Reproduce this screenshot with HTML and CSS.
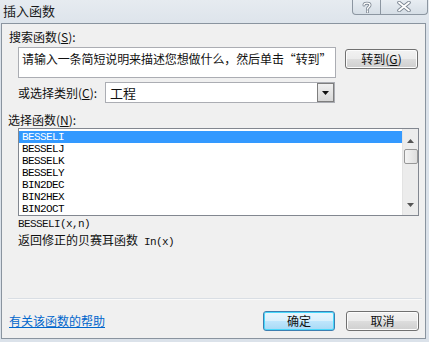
FILE: index.html
```html
<!DOCTYPE html>
<html>
<head>
<meta charset="utf-8">
<link rel="stylesheet" href="styles.css">
</head>
<body>
<div class="window">
  <div class="titlebar">
    <span class="title">插入函数</span>
    <div class="caption">
      <div class="cap-btn help">
        <svg width="12" height="12" viewBox="0 0 12 12"><path d="M3 4 C3 1.5 9 1.5 9 4 C9 6 6.5 6 6.5 8 M6.5 10 L6.5 11" fill="none" stroke="#7d8793" stroke-width="3" stroke-linecap="round"/><path d="M3 4 C3 1.5 9 1.5 9 4 C9 6 6.5 6 6.5 8 M6.5 10 L6.5 11" fill="none" stroke="#fff" stroke-width="1.4" stroke-linecap="round"/></svg>
      </div>
      <div class="cap-btn close">
        <svg width="14" height="11" viewBox="0 0 14 11"><path d="M2 1.5 L12 9.5 M12 1.5 L2 9.5" stroke="#7d8793" stroke-width="3.6" stroke-linecap="round"/><path d="M2 1.5 L12 9.5 M12 1.5 L2 9.5" stroke="#fff" stroke-width="1.8" stroke-linecap="round"/></svg>
      </div>
    </div>
  </div>
  <div class="client">
    <div class="label l-search">搜索函数(<u>S</u>):</div>
    <div class="search-row">
      <div class="textbox">请输入一条简短说明来描述您想做什么，然后单击“转到”</div>
      <div class="btn go">转到(<u>G</u>)</div>
    </div>
    <div class="cat-row">
      <span class="label">或选择类别(<u>C</u>):</span>
      <div class="select">
        <span class="sel-text">工程</span>
        <div class="drop">
          <svg width="7" height="4" viewBox="0 0 7 4"><path d="M0 0 H7 L3.5 4 Z" fill="#111"/></svg>
        </div>
      </div>
    </div>
    <div class="label l-func">选择函数(<u>N</u>):</div>
    <div class="listbox">
      <div class="items">
        <div class="item sel">BESSELI</div>
        <div class="item">BESSELJ</div>
        <div class="item">BESSELK</div>
        <div class="item">BESSELY</div>
        <div class="item">BIN2DEC</div>
        <div class="item">BIN2HEX</div>
        <div class="item">BIN2OCT</div>
      </div>
      <div class="vscroll">
        <svg class="arr" width="7" height="4" viewBox="0 0 7 4"><path d="M3.5 0 L7 4 H0 Z" fill="#555"/></svg>
        <div class="thumb"></div>
        <div class="track"></div>
        <svg class="arr" width="7" height="4" viewBox="0 0 7 4"><path d="M0 0 H7 L3.5 4 Z" fill="#555"/></svg>
      </div>
    </div>
    <div class="sig mono">BESSELI(x,n)</div>
    <div class="desc">返回修正的贝赛耳函数<span class="mono"> In(x)</span></div>
    <div class="sep"></div>
    <div class="footer">
      <a class="link">有关该函数的帮助</a>
      <div class="btns">
        <div class="btn default">确定</div>
        <div class="btn">取消</div>
      </div>
    </div>
  </div>
</div>
</body>
</html>
```

FILE: styles.css
```css
* { box-sizing: border-box; }
html, body { margin: 0; padding: 0; }
body {
  width: 429px;
  height: 342px;
  overflow: hidden;
  font-family: "Noto Sans CJK SC", "Noto Sans", sans-serif;
  font-size: 12px;
  color: #111;
}
u { text-decoration: underline; }
.window {
  width: 429px;
  height: 342px;
  background: linear-gradient(#e6ebf0, #dbe2ea 30px, #dbe2ea);
  display: flex;
  flex-direction: column;
}
.titlebar {
  height: 23px;
  display: flex;
  align-items: flex-start;
  position: relative;
}
.title {
  margin: 2px 0 0 3px;
  font-size: 13px;
  line-height: 17px;
  color: #1a1a1a;
}
.caption {
  position: absolute;
  top: -1px;
  left: 352px;
  display: flex;
  border: 1px solid #8c96a1;
  border-top: none;
  border-radius: 0 0 4px 4px;
  height: 16px;
  width: 76px;
  background: linear-gradient(#e9eef3, #d6dee6);
  overflow: hidden;
}
.cap-btn {
  height: 15px;
  display: flex;
  align-items: center;
  justify-content: center;
}
.cap-btn.help { width: 28px; border-right: 1px solid #8c96a1; }
.cap-btn.close { flex: 1; }
.client {
  margin: 0 3px 3px 1px;
  flex: 1;
  border: 1px solid #8a949f;
  background: #f0f0f0;
  padding: 0;
}
.label { line-height: 16px; white-space: nowrap; }
.l-search { margin: 5px 0 0 7px; }
.search-row {
  display: flex;
  align-items: flex-start;
  margin: 2px 0 0 16px;
}
.textbox {
  width: 318px;
  height: 31px;
  border: 1px solid #abadb3;
  background: #fff;
  padding: 2px 0 0 3px;
  font-size: 12px;
  letter-spacing: -0.1px;
  line-height: 17px;
  white-space: nowrap;
}
.btn {
  width: 73px;
  height: 20px;
  border: 1px solid #707070;
  border-radius: 3px;
  background: linear-gradient(#f2f2f2 0%, #ebebeb 50%, #dddddd 51%, #cfcfcf 100%);
  box-shadow: inset 0 0 0 1px #fcfcfc;
  display: flex;
  align-items: center;
  justify-content: center;
  line-height: 16px;
}
.btn.go { margin: 2px 0 0 9px; }
.cat-row {
  display: flex;
  align-items: center;
  margin: 4px 0 0 16px;
}
.cat-row .label { width: 87px; }
.select {
  width: 230px;
  height: 21px;
  border: 1px solid #abadb3;
  background: #fff;
  display: flex;
  align-items: center;
  justify-content: space-between;
  padding: 0 0 0 4px;
}
.sel-text { font-size: 13px; line-height: 17px; }
.drop {
  width: 17px;
  height: 19px;
  border: 1px solid #7e7e7e;
  background: linear-gradient(#f0f0f0, #d8d8d8);
  display: flex;
  align-items: center;
  justify-content: center;
}
.l-func { margin: 9px 0 0 6px; }
.listbox {
  margin: 0 0 0 16px;
  width: 401px;
  height: 88px;
  border: 1px solid #828790;
  background: #fff;
  display: flex;
}
.items { flex: 1; padding-top: 2px; }
.item {
  height: 12px;
  line-height: 12px;
  padding-left: 3px;
  font-family: "Liberation Mono", monospace;
  font-size: 11px;
  letter-spacing: -0.6px;
  color: #000;
}
.item.sel { background: #3399ff; color: #fff; }
.vscroll {
  width: 16px;
  background: #ececec;
  border-left: 1px solid #e3e3e3;
  display: flex;
  flex-direction: column;
  align-items: center;
  padding: 10px 0 8px;
}
.thumb {
  margin-top: 6px;
  width: 14px;
  height: 15px;
  border: 1px solid #979797;
  border-radius: 2px;
  background: linear-gradient(90deg, #f4f4f4, #dedede);
}
.track { flex: 1; }
.mono {
  font-family: "Liberation Mono", monospace;
  font-size: 11px;
  letter-spacing: -0.6px;
}
.sig { margin: 2px 0 0 16px; line-height: 13px; }
.desc { margin: 1px 0 0 16px; line-height: 16px; }
.sep {
  margin: 48px 3px 0 6px;
  height: 2px;
  border-top: 1px solid #d9dee4;
  border-bottom: 1px solid #fafafa;
}
.footer {
  display: flex;
  align-items: center;
  justify-content: space-between;
  margin: 11px 6px 0 7px;
}
.link {
  color: #0066cc;
  text-decoration: underline;
  line-height: 16px;
}
.btns { display: flex; gap: 11px; }
.btn.default {
  width: 72px;
  border-color: #3c7fb1;
  box-shadow: inset 0 0 0 1px #48d8fb;
  background: linear-gradient(#eaf6fd 0%, #d9f0fc 50%, #bee6fd 51%, #a7d9f5 100%);
}
```
